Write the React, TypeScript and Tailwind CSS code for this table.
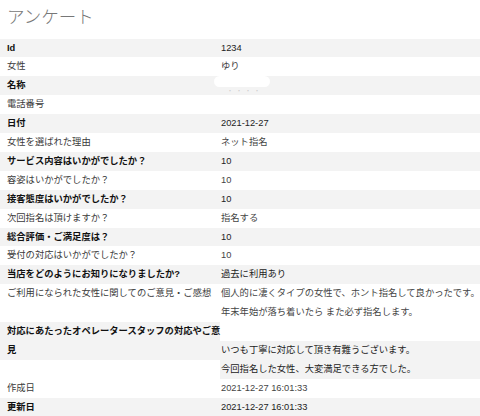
type Row = {
  label: string;
  values: string[];
  masked?: boolean;
};

const rows: Row[] = [
  { label: "Id", values: ["1234"] },
  { label: "女性", values: ["ゆり"] },
  { label: "名称", values: [""], masked: true },
  { label: "電話番号", values: [""] },
  { label: "日付", values: ["2021-12-27"] },
  { label: "女性を選ばれた理由", values: ["ネット指名"] },
  { label: "サービス内容はいかがでしたか？", values: ["10"] },
  { label: "容姿はいかがでしたか？", values: ["10"] },
  { label: "接客態度はいかがでしたか？", values: ["10"] },
  { label: "次回指名は頂けますか？", values: ["指名する"] },
  { label: "総合評価・ご満足度は？", values: ["10"] },
  { label: "受付の対応はいかがでしたか？", values: ["10"] },
  { label: "当店をどのようにお知りになりましたか?", values: ["過去に利用あり"] },
  {
    label: "ご利用になられた女性に関してのご意見・ご感想",
    values: [
      "個人的に凄くタイプの女性で、ホント指名して良かったです。",
      "年末年始が落ち着いたら また必ず指名します。",
    ],
  },
];

const font = "font-['Liberation_Sans','Noto_Sans_CJK_JP',sans-serif]";

function InfoRow({ row, striped }: { row: Row; striped: boolean }) {
  return (
    <div
      className={`grid grid-cols-[220px_1fr] ${striped ? "bg-[#f3f3f3]" : "bg-white"}`}
    >
      <div
        className={`pl-[7px] whitespace-nowrap ${
          striped ? "font-bold text-[#111]" : "text-[#3a3a3a]"
        }`}
      >
        {row.label}
      </div>
      <div className={`pl-[1px] ${striped ? "text-[#222]" : "text-[#444]"}`}>
        {row.values.map((v, i) => (
          <div key={i} className="h-[18.9px] whitespace-nowrap">
            {row.masked ? (
              <div className="relative h-full">
                <span className="absolute left-[6px] top-[12px] text-[6px] leading-none tracking-[3px] text-[#ccc]">
                  ・・・・
                </span>
                <div className="absolute left-[-7px] top-[0px] h-[11px] w-[56px] rounded-full bg-white" />
              </div>
            ) : (
              v
            )}
          </div>
        ))}
      </div>
    </div>
  );
}

export default function App() {
  return (
    <div className={`w-[480px] h-[416px] overflow-hidden bg-white ${font} text-[9.3px] leading-[18.9px]`}>
      <div className="h-[38.5px] pl-[7px] pt-[5px]">
        <h1 className="font-['Noto_Sans_CJK_JP',sans-serif] text-[17.5px] leading-[22px] font-light text-[#777]">
          アンケート
        </h1>
      </div>

      {rows.map((row, i) => (
        <InfoRow key={row.label} row={row} striped={i % 2 === 0} />
      ))}

      {/* staff comments: label wraps, value starts one line lower */}
      <div className="grid grid-cols-[220px_1fr]">
        <div>
          <div className="bg-[#f3f3f3] pl-[7px] font-bold text-[#111]">
            <div className="whitespace-nowrap">対応にあたったオペレータースタッフの対応やご意</div>
            <div>見</div>
          </div>
        </div>
        <div className="pt-[18.9px]">
          <div className="bg-[#f3f3f3] pl-[1px] text-[#222]">
            <div className="whitespace-nowrap">いつも丁寧に対応して頂き有難うございます。</div>
            <div className="whitespace-nowrap">今回指名した女性、大変満足できる方でした。</div>
          </div>
        </div>
      </div>

      <InfoRow row={{ label: "作成日", values: ["2021-12-27 16:01:33"] }} striped={false} />
      <InfoRow row={{ label: "更新日", values: ["2021-12-27 16:01:33"] }} striped={true} />
    </div>
  );
}
